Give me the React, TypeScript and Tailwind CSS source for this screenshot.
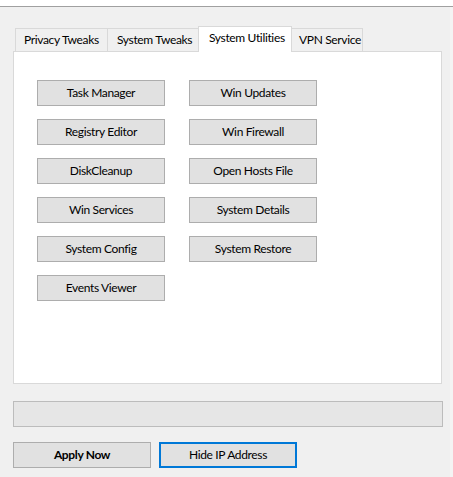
import React from "react";

const leftColumn = ["Task Manager", "Registry Editor", "DiskCleanup", "Win Services", "System Config", "Events Viewer"];
const rightColumn = ["Win Updates", "Win Firewall", "Open Hosts File", "System Details", "System Restore"];

function UtilButton({ label }: { label: string }) {
  return (
    <button className="flex h-[26px] w-[128px] items-center justify-center whitespace-nowrap border border-[#adadad] bg-[#e1e1e1] text-[12px] text-black">
      {label}
    </button>
  );
}

export default function App() {
  return (
    <div
      className="flex h-[477px] w-[453px] flex-col overflow-hidden bg-[#f0f0f0] tracking-[-0.35px] text-black"
      style={{ fontFamily: '"Segoe UI", Lato, "Noto Sans", Arial, sans-serif' }}
    >
      <div className="h-[6px] bg-white" />
      <div className="h-px bg-[#a0a0a0]" />
      <div className="flex flex-1">
        <div className="flex w-[450px] flex-col pl-[13px]">
          {/* tab strip */}
          <div className="mt-[19px] flex h-[25px] items-end whitespace-nowrap pl-[2px] text-[12px]">
            <div className="flex h-[23px] w-[92px] items-center border-l border-t border-[#d9d9d9] pl-[8px]">
              Privacy Tweaks
            </div>
            <div className="flex h-[23px] w-[91px] items-center border-l border-t border-[#d9d9d9] pl-[9px]">
              System Tweaks
            </div>
            <div className="relative z-10 -mb-px flex h-[26px] w-[94px] items-center border-x border-t border-[#d9d9d9] bg-white pb-[3px] pl-[10px]">
              System Utilities
            </div>
            <div className="flex h-[23px] w-[71px] items-center border-r border-t border-[#d9d9d9] pl-[7px]">
              VPN Service
            </div>
          </div>

          {/* tab page */}
          <div className="flex h-[333px] w-[429px] gap-[24px] border border-[#d9d9d9] bg-white pl-[23px] pt-[28px]">
            <div className="flex flex-col gap-[13px]">
              {leftColumn.map((l) => (
                <UtilButton key={l} label={l} />
              ))}
            </div>
            <div className="flex flex-col gap-[13px]">
              {rightColumn.map((l) => (
                <UtilButton key={l} label={l} />
              ))}
            </div>
          </div>

          {/* progress bar */}
          <div className="mt-[17px] h-[26px] w-[430px] border border-[#bcbcbc] bg-[#e6e6e6]" />

          {/* actions */}
          <div className="mt-[15px] flex gap-[8px]">
            <button className="flex h-[26px] w-[138px] items-center justify-center border border-[#adadad] bg-[#e1e1e1] text-[12px] font-bold text-black">
              Apply Now
            </button>
            <button className="flex h-[26px] w-[138px] items-center justify-center border-2 border-[#0078d7] bg-[#e1e1e1] text-[12px] text-black">
              Hide IP Address
            </button>
          </div>
        </div>
        <div className="w-[3px] bg-[#f4f4f4]" />
      </div>
    </div>
  );
}
